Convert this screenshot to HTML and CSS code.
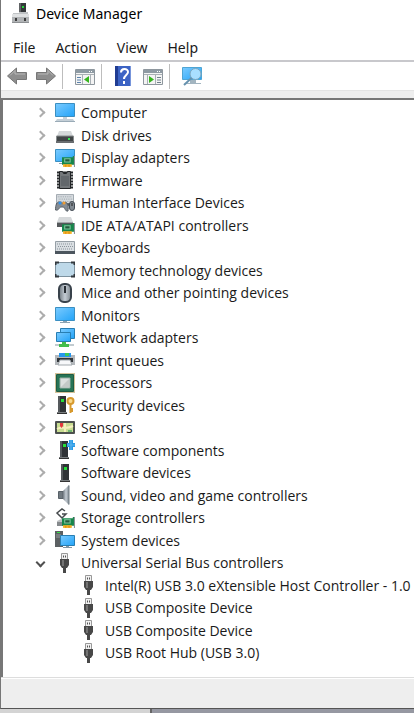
FILE: index.html
```html
<!DOCTYPE html>
<html lang="en">
<head>
    <meta charset="UTF-8">
    <meta name="viewport" content="width=device-width, initial-scale=1.0">
    <title>Device Manager</title>
    <link rel="stylesheet" href="styles.css">
</head>
<body>
    <!-- shared icon parts -->
    <svg class="defs" aria-hidden="true">
        <defs>
            <linearGradient id="blue" x1="0" y1="0" x2="1" y2="1"><stop offset="0" stop-color="#7bcbff"/><stop offset="1" stop-color="#22a3f8"/></linearGradient>
            <linearGradient id="metal" x1="0" y1="0" x2="1" y2="0"><stop offset="0" stop-color="#6f787f"/><stop offset=".5" stop-color="#c4ccd4"/><stop offset="1" stop-color="#7e878e"/></linearGradient>
            <symbol id="usb" viewBox="0 0 20 20">
                <path d="M6.500 .5h6v6h-6z" fill="#f2f2f2" stroke="#999"/>
                <path d="M8 2.500h1v2H8zM10 2.500h1v2h-1z" fill="#555"/>
                <path d="M5 6h9v6l-2 3h-1v5H8v-5H7l-2-3z" fill="#484848"/>
                <path d="M7 7h2v6H7z" fill="#747474"/>
            </symbol>
            <symbol id="card" viewBox="0 0 12 10">
                <path d="M0 1h10V0h2v8H0z" fill="#16864b"/>
                <path d="M2.500 2.500h5v3h-5z" fill="#235b3d" stroke="#7ec69d"/>
                <path d="M1 7.500h8V10H1z" fill="#f6ad22"/>
                <path d="M3.500 8v2M6.500 8v2" stroke="#c77b00" stroke-width=".6"/>
                <path d="M11.500 0v10" stroke="#8b9499"/>
            </symbol>
            <symbol id="tower" viewBox="0 0 12 20">
                <path d="M2 1h8v16H2z" fill="#303336"/>
                <path d="M2 1h2v16H2z" fill="#55595c"/>
                <path d="M1 17h10v2H1z" fill="#777b7d"/>
                <path d="M1 18h10v1H1z" fill="#333"/>
                <path d="M5 4h3v3H5z" fill="#25df38"/>
            </symbol>
            <symbol id="keys" viewBox="0 0 20 13">
                <path d="M.5.5h19v12H.5z" fill="#d9dee2" stroke="#969fa6"/>
                <path d="M2 3h16M3 5.500h15M2 8h16" stroke="#8b949b" stroke-dasharray="1 1"/>
                <path d="M0 10h20v3H0z" fill="#4c565e"/>
            </symbol>
        </defs>
    </svg>

    <main class="window">
        <header class="titlebar">
            <svg class="icon" viewBox="0 0 20 20" aria-hidden="true">
                <path d="M9 0h7v10H9z" fill="#35383a"/><path d="M9 0h2v10H9z" fill="#606365"/><path d="M12 3h2v2h-2z" fill="#26d43b"/>
                <path d="M3 10h7v2H3zM9 9h9v3H9z" fill="#c0c3c5"/>
                <path d="M2 11h17v8H2z" fill="#b1b4b6"/><path d="M2 11h17v3H2z" fill="#e0e2e3"/>
                <path d="M5 15h2v3H5zM14 15h2v3h-2z" fill="#3d3d3d"/><path d="M2 19h17v1H2z" fill="#8d9093"/>
            </svg>
            <h1>Device Manager</h1>
        </header>
        <nav class="menubar">
            <a href="#">File</a>
            <a href="#">Action</a>
            <a href="#">View</a>
            <a href="#">Help</a>
        </nav>
        <div class="toolbar">
            <button type="button" aria-label="Back"><svg viewBox="0 0 20 20"><path d="M.5 10l9-8v4.500h10v7h-10V18z" fill="#8e8e8e" stroke="#777"/><path d="M3 9.500l5-5V8h10" fill="none" stroke="#b8b8b8"/></svg></button>
            <button type="button" aria-label="Forward"><svg viewBox="0 0 20 20"><path d="M19.500 10l-9-8v4.500H.5v7h10V18z" fill="#8e8e8e" stroke="#777"/><path d="M17 9.500l-5-5V8H2" fill="none" stroke="#b8b8b8"/></svg></button>
            <span class="divider"></span>
            <button type="button" aria-label="Show console tree"><svg viewBox="0 0 20 20"><path d="M.5 3.500h19v15H.5z" fill="#f4f4f4" stroke="#8e979e"/><path d="M1 4h18v3H1z" fill="#8e9aa3"/><path d="M14 5h1v1h-1zM16 5h1v1h-1z" fill="#fff"/><path d="M1 8.500h18M7.500 9v9M15.500 9v9" stroke="#a9b0b5"/><path d="M2 11.500h4M2 14h4M2 16.500h4" stroke="#5a82ac"/><path d="M14 10v7l-5-3.500z" fill="#36b51d"/></svg></button>
            <span class="divider"></span>
            <button type="button" aria-label="Help"><svg viewBox="0 0 20 20"><path d="M1 0h16v20H1z" fill="#3c63c4"/><path d="M1 0h3v20H1z" fill="#203c92"/><path d="M16.500 0v20" stroke="#7795db"/><path d="M7 6.500c0-4.500 7-4.500 7-.5 0 3-4 3-4 7" fill="none" stroke="#fff" stroke-width="2"/><path d="M9 15h2v3H9z" fill="#fff"/></svg></button>
            <button type="button" aria-label="Show action pane"><svg viewBox="0 0 20 20"><path d="M.5 3.500h19v15H.5z" fill="#f4f4f4" stroke="#8e979e"/><path d="M1 4h18v3H1z" fill="#8e9aa3"/><path d="M14 5h1v1h-1zM16 5h1v1h-1z" fill="#fff"/><path d="M1 8.500h18M4.500 9v9M12.500 9v9" stroke="#a9b0b5"/><path d="M14 11.500h4M14 14h4M14 16.500h4" stroke="#70808b"/><path d="M6 10v7l5-3.500z" fill="#36b51d"/></svg></button>
            <span class="divider"></span>
            <button type="button" aria-label="Scan for hardware changes"><svg viewBox="0 0 20 20"><path d="M.5 1.500h19v12H.5z" fill="url(#blue)" stroke="#4fa5d4"/><path d="M8 14h6v3h5v1H4v-1h4z" fill="#a3b5c0"/><circle cx="13.500" cy="8" r="5.500" fill="#a9dfff" stroke="#7ea6bd"/><path d="M9.500 12L2 19" stroke="#6792ae" stroke-width="2"/></svg></button>
        </div>

        <section class="tree-panel" aria-label="Devices">
            <ul class="tree">
                <li><div class="row"><button type="button" class="toggle" aria-label="Expand Computer"></button>
                    <svg class="icon" viewBox="0 0 20 20"><path d="M.5.5h19v13H.5z" fill="url(#blue)" stroke="#3b8fc1"/><path d="M8 14h4v2H8z" fill="#c5d0d8"/><path d="M2 16h16l2 3H0z" fill="#c4cfd7"/><path d="M0 18.500h20" stroke="#9aabb7"/></svg>
                    <span>Computer</span></div></li>
                <li><div class="row"><button type="button" class="toggle" aria-label="Expand Disk drives"></button>
                    <svg class="icon" viewBox="0 0 20 20"><path d="M4 6h12l2 5H2z" fill="#d5d8da"/><path d="M1.500 11h17v6h-17z" fill="#414547" stroke="#888c8e"/><path d="M1 16h18v2H1z" fill="#696d70"/><path d="M13 13h2v2h-2z" fill="#35e453"/></svg>
                    <span>Disk drives</span></div></li>
                <li><div class="row"><button type="button" class="toggle" aria-label="Expand Display adapters"></button>
                    <svg class="icon" viewBox="0 0 20 20"><path d="M.5 1.500h19v12H.5z" fill="url(#blue)" stroke="#3b8fc1"/><path d="M4 15h8v1H4z" fill="#8ca0ae"/><use href="#card" x="7" y="8" width="13" height="11"/></svg>
                    <span>Display adapters</span></div></li>
                <li><div class="row"><button type="button" class="toggle" aria-label="Expand Firmware"></button>
                    <svg class="icon" viewBox="0 0 20 20"><path d="M2 2.500h16M2 5.500h16M2 8.500h16M2 11.500h16M2 14.500h16M2 17.500h16" stroke="#25282a" stroke-width="2"/><path d="M4.500 1.500h3l1 2h3l1-2h3v17h-11z" fill="#73777a" stroke="#222527"/><path d="M6 6h8v10H6z" fill="#62676b"/></svg>
                    <span>Firmware</span></div></li>
                <li><div class="row"><button type="button" class="toggle" aria-label="Expand Human Interface Devices"></button>
                    <svg class="icon" viewBox="0 0 20 20"><use href="#keys" x="1" y="1" width="18" height="12"/><path d="M.5 17c0-5 1-8 4-8 2 0 1 1 3.500 1s2-1 4 0c2 3 1 6 1 8-3 1-3-4-5-4H6c-2 0-2 4-5.500 3z" fill="#858c93" stroke="#596169"/><circle cx="5" cy="10" r="1.500" fill="#2e92ed"/><circle cx="9" cy="10" r="1.500" fill="#ef9c31"/><rect x="14.500" y="8.500" width="5" height="9" rx="2.500" fill="#818a92" stroke="#434b53"/><path d="M17 10v3" stroke="#222"/></svg>
                    <span>Human Interface Devices</span></div></li>
                <li><div class="row"><button type="button" class="toggle" aria-label="Expand IDE ATA/ATAPI controllers"></button>
                    <svg class="icon" viewBox="0 0 20 20"><path d="M4 2h12l2 5H2z" fill="#d6d9db"/><path d="M2 7h16v5H2z" fill="#55595b"/><path d="M2 7h16v1H2z" fill="#a3a7a9"/><use href="#card" x="7" y="8" width="13" height="11"/></svg>
                    <span>IDE ATA/ATAPI controllers</span></div></li>
                <li><div class="row"><button type="button" class="toggle" aria-label="Expand Keyboards"></button>
                    <svg class="icon" viewBox="0 0 20 20"><use href="#keys" x="0" y="3" width="20" height="13"/></svg>
                    <span>Keyboards</span></div></li>
                <li><div class="row"><button type="button" class="toggle" aria-label="Expand Memory technology devices"></button>
                    <svg class="icon" viewBox="0 0 20 20"><rect x=".5" y="2.500" width="19" height="14" rx="1" fill="#bed9e9" stroke="#7d929f"/><path d="M.5 5V2.500H4M16 2.500h3.500V5M.5 14v2.500H4M16 16.500h3.500V14" fill="none" stroke="#33393e" stroke-width="2"/></svg>
                    <span>Memory technology devices</span></div></li>
                <li><div class="row"><button type="button" class="toggle" aria-label="Expand Mice and other pointing devices"></button>
                    <svg class="icon" viewBox="0 0 20 20"><rect x="4" y="1" width="12" height="18" rx="5" fill="url(#metal)" stroke="#39424b" stroke-width="2"/><path d="M10 3v7" stroke="#282e34" stroke-width="2"/></svg>
                    <span>Mice and other pointing devices</span></div></li>
                <li><div class="row"><button type="button" class="toggle" aria-label="Expand Monitors"></button>
                    <svg class="icon" viewBox="0 0 20 20"><path d="M.5 2.500h19v13H.5z" fill="url(#blue)" stroke="#3b8fc1"/><path d="M8 16h4v1h3v1H5v-1h3z" fill="#8da4b3"/></svg>
                    <span>Monitors</span></div></li>
                <li><div class="row"><button type="button" class="toggle" aria-label="Expand Network adapters"></button>
                    <svg class="icon" viewBox="0 0 20 20"><path d="M5.500.5h14v10h-14z" fill="url(#blue)" stroke="#287eb2"/><path d="M1.500 4.500h14v9h-14z" fill="url(#blue)" stroke="#287eb2"/><path d="M0 16h19v2H0z" fill="#c2cbd0"/><path d="M7 14h4v2h3v3H4v-3h3z" fill="#43bd4c"/></svg>
                    <span>Network adapters</span></div></li>
                <li><div class="row"><button type="button" class="toggle" aria-label="Expand Print queues"></button>
                    <svg class="icon" viewBox="0 0 20 20"><path d="M4 3h12v4H4z" fill="#2797ed"/><path d="M10 3h4v3h-4z" fill="#3bc95a"/><path d="M0 5h4v2h12V5h4v10H0z" fill="#b4b8bc"/><path d="M2 8h16v4H2z" fill="#303438"/><path d="M5 10h10l2 5H3z" fill="#f7f8fa" stroke="#a1a8ad"/></svg>
                    <span>Print queues</span></div></li>
                <li><div class="row"><button type="button" class="toggle" aria-label="Expand Processors"></button>
                    <svg class="icon" viewBox="0 0 20 20"><path d="M1.500 1.500h17v17h-17z" fill="#277455" stroke="#205c44"/><path d="M.5.5h19v19H.5z" fill="none" stroke="#fff"/><path d="M.5.5h19v19H.5z" fill="none" stroke="#a98432" stroke-dasharray="1 1"/><path d="M5 5h10v10H5z" fill="#dce0df" stroke="#97aca3"/><path d="M6 14l8-8v8z" fill="#c3c9c7"/></svg>
                    <span>Processors</span></div></li>
                <li><div class="row"><button type="button" class="toggle" aria-label="Expand Security devices"></button>
                    <svg class="icon" viewBox="0 0 20 20"><use href="#tower" x="1" y="0" width="12" height="20"/><circle cx="15.500" cy="6" r="3" fill="#f8d98b" stroke="#d7992d" stroke-width="2"/><path d="M15.500 9v9M16 14h2M16 16h2" stroke="#d7992d" stroke-width="2"/></svg>
                    <span>Security devices</span></div></li>
                <li><div class="row"><button type="button" class="toggle" aria-label="Expand Sensors"></button>
                    <svg class="icon" viewBox="0 0 20 20"><rect x="0" y="3" width="20" height="13" rx="1" fill="#4d514f"/><path d="M2 5h16v9H2z" fill="#c8dd91"/><path d="M2 11c5-3 8 1 16-3M10 5v9" fill="none" stroke="#f5f0bd" stroke-width="2"/><path d="M13 12h4v2h-4z" fill="#72b571"/><path d="M5 5h3v3l-1.500 2L5 8z" fill="#e5393d"/></svg>
                    <span>Sensors</span></div></li>
                <li><div class="row"><button type="button" class="toggle" aria-label="Expand Software components"></button>
                    <svg class="icon" viewBox="0 0 20 20"><use href="#tower" x="3" y="0" width="12" height="20"/><path d="M14 0h4v3h2v4h-2v3h-4V7h-2V3h2z" fill="#299be5"/><path d="M12 5h8M16 0v10" stroke="#62b6ef"/></svg>
                    <span>Software components</span></div></li>
                <li><div class="row"><button type="button" class="toggle" aria-label="Expand Software devices"></button>
                    <svg class="icon" viewBox="0 0 20 20"><use href="#tower" x="4" y="0" width="12" height="20"/></svg>
                    <span>Software devices</span></div></li>
                <li><div class="row"><button type="button" class="toggle" aria-label="Expand Sound, video and game controllers"></button>
                    <svg class="icon" viewBox="0 0 20 20"><path d="M3.500 6.500H8v7H3.500z" fill="#707980" stroke="#586168"/><path d="M8 6l6-6v20l-6-6z" fill="url(#metal)"/><path d="M14 .5v19" stroke="#737e86"/></svg>
                    <span>Sound, video and game controllers</span></div></li>
                <li><div class="row"><button type="button" class="toggle" aria-label="Expand Storage controllers"></button>
                    <svg class="icon" viewBox="0 0 20 20"><path d="M10 3L7 1 2 5l5 5 4-4H7" fill="none" stroke="#464a4d" stroke-width="1.500"/><path d="M2 14h8v4H2z" fill="#85898c"/><path d="M2 13l4-2 6 1v2H2z" fill="#bdc0c2"/><use href="#card" x="7" y="9" width="13" height="11"/></svg>
                    <span>Storage controllers</span></div></li>
                <li><div class="row"><button type="button" class="toggle" aria-label="Expand System devices"></button>
                    <svg class="icon" viewBox="0 0 20 20"><path d="M0 1h8v16H0z" fill="#5c6062"/><path d="M2 2h3v1H2z" fill="#37df48"/><path d="M1 5h5M1 7h5" stroke="#969b9d"/><path d="M5.500 5.500h14v10h-14z" fill="url(#blue)" stroke="#287eb2"/><path d="M11 16h3v1h3v1H8v-1h3z" fill="#8296a3"/></svg>
                    <span>System devices</span></div></li>
                <li><div class="row"><button type="button" class="toggle open" aria-label="Collapse Universal Serial Bus controllers"></button>
                    <svg class="icon"><use href="#usb"/></svg>
                    <span>Universal Serial Bus controllers</span></div>
                    <ul class="subtree">
                        <li class="row"><svg class="icon"><use href="#usb"/></svg><span>Intel(R) USB 3.0 eXtensible Host Controller - 1.0 (</span></li>
                        <li class="row"><svg class="icon"><use href="#usb"/></svg><span>USB Composite Device</span></li>
                        <li class="row"><svg class="icon"><use href="#usb"/></svg><span>USB Composite Device</span></li>
                        <li class="row"><svg class="icon"><use href="#usb"/></svg><span>USB Root Hub (USB 3.0)</span></li>
                    </ul>
                </li>
            </ul>
        </section>
        <footer class="statusbar"></footer>
    </main>
    <div class="desktop"></div>
</body>
</html>
```
FILE: styles.css
```css
* {
    box-sizing: border-box;
}
body {
    font-family: "Noto Sans", "Open Sans", sans-serif;
    font-size: 14px;
    color: #1a1a1a;
    background-color: #6d7078;
    margin: 0;
    min-height: 100vh;
    display: flex;
    flex-direction: column;
    overflow-x: hidden;
}
.defs {
    position: absolute;
    width: 0;
    height: 0;
}
.window {
    flex: 1;
    display: flex;
    flex-direction: column;
    background-color: #fff;
    border-left: 1px solid #777;
    border-bottom: 1px solid #555;
}
.icon {
    width: 20px;
    height: 20px;
    flex: none;
}
.titlebar {
    display: flex;
    align-items: center;
    gap: 6px;
    height: 26px;
    padding-left: 9px;
}
h1 {
    font-size: 14px;
    font-weight: 400;
    color: #000;
    margin: 0;
}
.menubar {
    display: flex;
    align-items: center;
    gap: 20px;
    height: 34px;
    padding: 8px 12px 0;
}
.menubar a {
    color: #1a1a1a;
    text-decoration: none;
}
.toolbar {
    display: flex;
    align-items: center;
    gap: 9px;
    height: 31px;
    padding-left: 6px;
    border-top: 2px solid #c8c8cc;
    border-bottom: 1px solid #e4e4e4;
}
.toolbar button {
    width: 20px;
    height: 20px;
    padding: 0;
    border: none;
    background: none;
}
.toolbar svg {
    display: block;
    width: 100%;
    height: 100%;
}
.divider {
    width: 1px;
    height: 25px;
    margin: 0 3px 0 -3px;
    background-color: #bdbdbd;
}
.tree-panel {
    flex: 1;
    overflow: hidden;
    font-family: "Open Sans", "Noto Sans", sans-serif;
    padding-top: 1px;
    border: solid #777;
    border-width: 2px 0 0 2px;
    box-shadow: 0 -7px #eee;
    margin-top: 7px;
}
.tree, .subtree {
    list-style: none;
    margin: 0;
    padding: 0;
}
.tree {
    padding-left: 32px;
}
.row {
    display: flex;
    align-items: center;
    height: 22px;
    white-space: nowrap;
}
.tree > li:nth-child(odd) > .row,
.subtree .row:nth-child(even) {
    height: 23px;
}
.row .icon {
    margin-right: 6px;
}
.subtree {
    padding-left: 44px;
}
.toggle {
    display: flex;
    align-items: center;
    justify-content: center;
    width: 10px;
    height: 20px;
    margin-right: 10px;
    padding: 0;
    border: none;
    background: none;
}
.toggle::before {
    content: "";
    width: 5px;
    height: 5px;
    border: solid #adadad;
    border-width: 2px 2px 0 0;
    transform: rotate(45deg);
}
.toggle.open::before {
    border-color: #505050;
    transform: rotate(135deg);
}
.statusbar {
    height: 31px;
    background-color: #eee;
    border-top: 1px solid #ddd;
    box-shadow: inset 0 1px #fff;
}
.desktop {
    height: 4px;
    background: linear-gradient(to right, #d4d4d4 150px, #666 150px, #666 152px, #9698a2 152px);
}
```
